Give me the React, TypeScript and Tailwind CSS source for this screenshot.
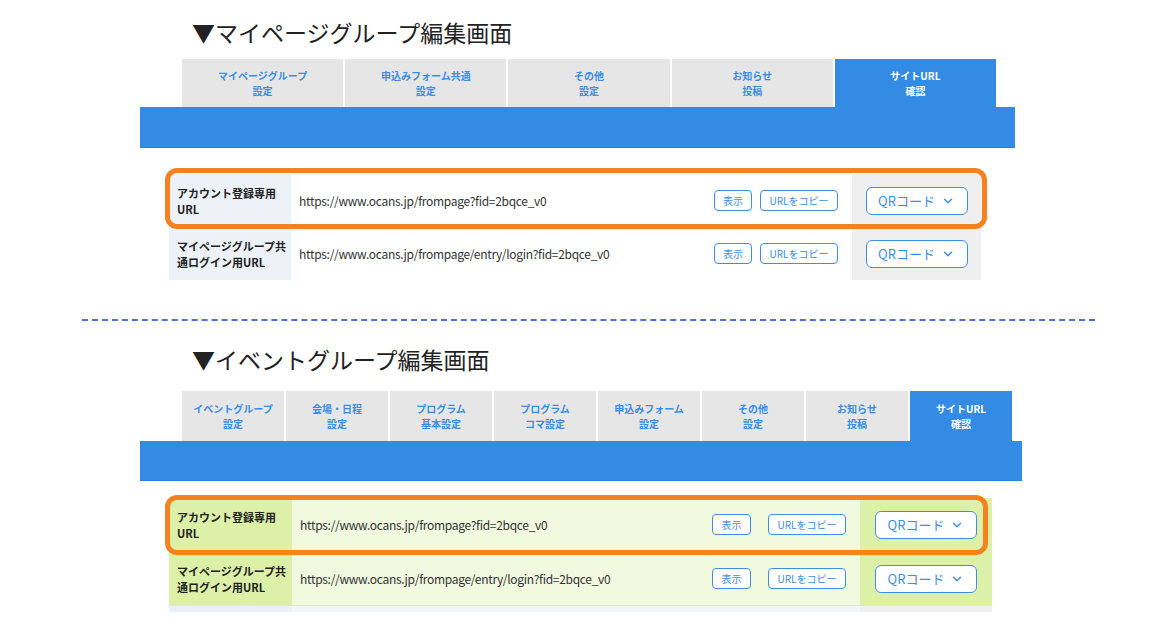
import { ChevronDown } from 'lucide-react';

type Tab = [string, string];

const mypageTabs: Tab[] = [
  ['マイページグループ', '設定'],
  ['申込みフォーム共通', '設定'],
  ['その他', '設定'],
  ['お知らせ', '投稿'],
  ['サイトURL', '確認'],
];

const eventTabs: Tab[] = [
  ['イベントグループ', '設定'],
  ['会場・日程', '設定'],
  ['プログラム', '基本設定'],
  ['プログラム', 'コマ設定'],
  ['申込みフォーム', '設定'],
  ['その他', '設定'],
  ['お知らせ', '投稿'],
  ['サイトURL', '確認'],
];

const rows = [
  { label: ['アカウント登録専用', 'URL'], url: 'https://www.ocans.jp/frompage?fid=2bqce_v0' },
  { label: ['マイページグループ共', '通ログイン用URL'], url: 'https://www.ocans.jp/frompage/entry/login?fid=2bqce_v0' },
];

function Tabs({ tabs, className, tabHeight }: { tabs: Tab[]; className: string; tabHeight: string }) {
  return (
    <div className={`flex gap-[2px] ml-[42px] ${className}`}>
      {tabs.map(([a, b], i) => {
        const active = i === tabs.length - 1;
        return (
          <div
            key={i}
            className={`flex-1 flex flex-col items-center justify-center text-[10px] font-bold leading-[15px] ${tabHeight} ${
              active ? 'bg-[#338be4] text-white' : 'bg-[#e6e6e6] text-[#3a8ee6]'
            }`}
          >
            <span>{a}</span>
            <span>{b}</span>
          </div>
        );
      })}
    </div>
  );
}

function SmallButton({ children, width }: { children: React.ReactNode; width: string }) {
  return (
    <button className={`h-[21px] ${width} flex items-center justify-center bg-white border-[1.5px] border-[#3d8ee6] rounded-[4px] text-[10px] text-[#3d8ee6]`}>
      {children}
    </button>
  );
}

function QrButton() {
  return (
    <button className="w-[102px] h-[28px] flex items-center justify-center gap-[6px] bg-white border-[1.5px] border-[#3d8ee6] rounded-[6px] text-[13px] text-[#3d8ee6]">
      QRコード
      <ChevronDown size={14} strokeWidth={2.5} />
    </button>
  );
}

export default function App() {
  return (
    <div
      className="w-[1174px] h-[623px] bg-white overflow-hidden text-[#222]"
      style={{ fontFamily: '"Noto Sans CJK JP", "Noto Sans", sans-serif' }}
    >
      {/* マイページグループ */}
      <h2 className="pt-[17px] pl-[192px] text-[23px] leading-[30px] font-normal text-[#222]">▼マイページグループ編集画面</h2>

      <div className="ml-[140px] mt-[12px] w-[875px]">
        <Tabs tabs={mypageTabs} className="w-[814px]" tabHeight="h-[48px]" />
        <div className="h-[41px] bg-[#338be4] border-b border-[#2a80da]" />
      </div>

      <div className="relative ml-[169px] mt-[26px] w-[812px]">
        {rows.map((r, i) => (
          <div key={i} className="flex h-[53px]">
            <div className="w-[122px] bg-[#edf2f9] flex flex-col justify-center pl-[8px] text-[11px] font-bold leading-[16px]">
              <span>{r.label[0]}</span>
              <span>{r.label[1]}</span>
            </div>
            <div className="flex-1 flex items-center pl-[8px] pr-[14px] bg-white">
              <span className="flex-1 text-[12px] tracking-[-0.3px] text-[#333]">{r.url}</span>
              <div className="flex gap-[8px]">
                <SmallButton width="w-[38px]">表示</SmallButton>
                <SmallButton width="w-[78px]">URLをコピー</SmallButton>
              </div>
            </div>
            <div className="w-[129px] bg-[#efefef] flex items-center justify-center">
              <QrButton />
            </div>
          </div>
        ))}
        <div className="absolute left-[-4px] top-[-6px] w-[822px] h-[61px] border-[5px] border-[#f6821f] rounded-[12px] pointer-events-none" />
      </div>

      <div className="ml-[82px] mt-[39px] w-[1013px] border-t-2 border-dashed border-[#5470cd]" />

      {/* イベントグループ */}
      <h2 className="mt-[23px] pl-[192px] text-[23px] leading-[30px] font-normal text-[#222]">▼イベントグループ編集画面</h2>

      <div className="ml-[140px] mt-[17px] w-[882px]">
        <Tabs tabs={eventTabs} className="w-[830px]" tabHeight="h-[50px]" />
        <div className="h-[40px] bg-[#338be4] border-b border-[#2a80da]" />
      </div>

      <div className="relative ml-[169px] mt-[17px] w-[823px]">
        {rows.map((r, i) => (
          <div key={i} className="flex h-[54px] border-b border-[#e2e6de]">
            <div className="w-[123px] bg-[#ddf0a8] flex flex-col justify-center pl-[8px] text-[11px] font-bold leading-[16px]">
              <span>{r.label[0]}</span>
              <span>{r.label[1]}</span>
            </div>
            <div className="flex-1 flex items-center pl-[8px] pr-[14px] bg-[#f1f9df]">
              <span className="flex-1 text-[12px] tracking-[-0.3px] text-[#333]">{r.url}</span>
              <div className="flex gap-[17px]">
                <SmallButton width="w-[39px]">表示</SmallButton>
                <SmallButton width="w-[78px]">URLをコピー</SmallButton>
              </div>
            </div>
            <div className="w-[132px] bg-[#ddf0a8] flex items-center justify-center">
              <QrButton />
            </div>
          </div>
        ))}
        <div className="flex h-[6px]">
          <div className="w-[123px] bg-[#eaf0f8]" />
          <div className="flex-1 bg-[#f3f6f9]" />
          <div className="w-[132px] bg-[#efefef]" />
        </div>
        <div className="absolute left-[-4px] top-[-3px] w-[823px] h-[60px] border-[5px] border-[#f6821f] rounded-[12px] pointer-events-none" />
      </div>
    </div>
  );
}
